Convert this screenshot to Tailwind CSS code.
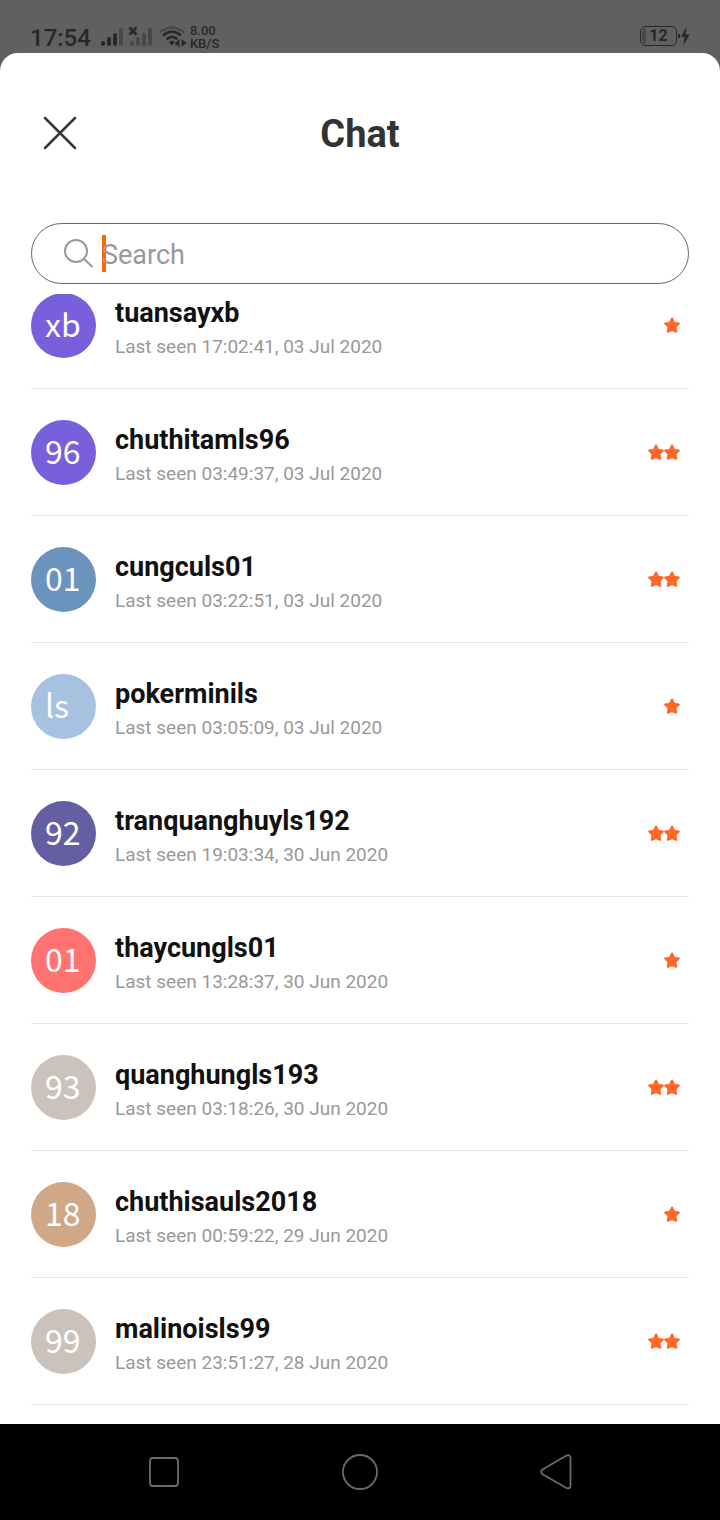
<!DOCTYPE html>
<html lang="en">
<head>
<meta charset="utf-8">
<meta name="viewport" content="width=device-width, initial-scale=1">
<title>Chat</title>
<script src="https://cdn.jsdelivr.net/npm/@tailwindcss/browser@4"></script>
</head>
<body class="flex min-h-screen flex-col bg-[#606060] font-['Roboto',sans-serif]">
<svg class="hidden" aria-hidden="true">
  <symbol id="star" viewBox="0 0 16 16"><path d="M8 1.500 10.100 5.800 14.800 6.500 11.500 9.900 12.200 14.800 8 13 3.800 14.800 4.500 9.900 1.200 6.500 5.900 5.800Z" fill="#ff6829" stroke="#ff6829" stroke-width="2" stroke-linejoin="round"/></symbol>
</svg>

<!-- Status bar -->
<header class="flex h-[53px] shrink-0 items-end pr-[30px] pb-[5px] pl-[30px] text-[#282828]">
  <span class="text-[24px] leading-5 font-medium">17:54</span>
  <svg class="ml-[10px] h-6 w-[52px]" viewBox="0 0 52 24" aria-hidden="true">
    <g fill="#282828"><rect x="0" y="17" width="4" height="5" rx="2"/><rect x="6" y="13" width="4" height="9" rx="2"/><rect x="12" y="9" width="4" height="13" rx="2"/></g>
    <g fill="#484848"><rect x="18" y="4" width="4" height="18" rx="2"/><rect x="29" y="17" width="4" height="5" rx="2"/><rect x="35" y="13" width="4" height="9" rx="2"/><rect x="41" y="9" width="4" height="13" rx="2"/><rect x="47" y="4" width="4" height="18" rx="2"/></g>
    <path d="M28.500 3.500l7 7M35.500 3.500l-7 7" stroke="#282828" stroke-width="2.600" fill="none"/>
  </svg>
  <svg class="ml-[6px] h-6 w-7" viewBox="0 0 28 24" aria-hidden="true">
    <g fill="none" stroke-width="2.600">
      <path d="M1 8.500Q13 -1.500 25 8.500" stroke="#484848"/>
      <path d="M4 11.500Q13 4 22 11.500M7.500 15.200Q13 10.500 18.500 15.200" stroke="#282828"/>
    </g>
    <path d="M10 18Q13 15.500 16 18L13 21.500Z" fill="#282828"/>
    <path d="M20.500 15v8l-5-3.200ZM22.500 23v-8l5 4Z" fill="#282828"/>
  </svg>
  <span class="ml-[3px] -mb-[2px] flex flex-col text-[13px] leading-[13px] font-medium"><span>8.00</span><span>KB/S</span></span>
  <span class="ml-auto flex items-center pb-[2px]">
    <span class="relative flex h-5 w-[37px] items-center justify-center rounded-[5px] border border-[#282828] text-[16px] leading-5 font-bold">
      <span class="absolute top-px bottom-px left-px w-1 rounded-l-sm bg-[#484848]"></span>12
    </span>
    <svg class="h-5 w-[13px]" viewBox="0 0 13 20" aria-hidden="true"><path d="M1 8h2v4H1ZM9.500 0.500 4 11H7.500L6.500 19.500 12.500 8.500H8.500Z" fill="#282828"/></svg>
  </span>
</header>

<main class="flex grow flex-col rounded-t-[18px] bg-white px-[31px]">
  <div class="grid grid-cols-[1fr_auto_1fr] items-center pt-14">
    <button type="button" aria-label="Close" class="ml-3 size-[34px]">
      <svg class="size-[34px]" viewBox="0 0 34 34" fill="none" stroke="#383838" stroke-width="2.500" stroke-linecap="round"><path d="M2 2 32 32M32 2 2 32"/></svg>
    </button>
    <h1 class="pt-[2px] text-[38px] leading-[46px] font-bold text-[#333]">Chat</h1>
  </div>

  <label class="relative mt-[66px] flex h-[61px] items-center rounded-full border border-[#666] pl-8">
    <svg class="size-[30px] shrink-0" viewBox="0 0 30 30" fill="none" stroke="#999" stroke-width="2"><circle cx="12" cy="12" r="11"/><path d="M19.500 19.500 28.500 28"/></svg>
    <span class="absolute top-[11px] left-[70px] h-[37px] w-1 bg-[#ff6600]"></span>
    <input type="text" placeholder="Search" aria-label="Search" class="relative ml-2 min-w-0 grow bg-transparent pt-[2px] pr-8 text-[27px] leading-8 text-[#333] outline-none placeholder:text-[#999]">
  </label>

  <!-- Contacts, scrolled part of the way into the first row -->
  <div class="mt-[10px] overflow-hidden">
    <ul class="-mt-8 pb-[19px]">
      <li class="flex h-[127px] items-center border-b border-[#e5e5e9]">
        <span class="h-[65px] w-[65px] shrink-0 rounded-full bg-[#7860dc] pl-[14px] font-['Noto_Sans_CJK_SC',sans-serif] text-[32px] leading-[60px] text-white">xb</span>
        <div class="ml-[19px] grow pt-[10px]"><h2 class="text-[27px] leading-[34px] font-bold text-[#111]">tuansayxb</h2><p class="text-[19px] leading-[34px] text-[#999]">Last seen 17:02:41, 03 Jul 2020</p></div>
        <span class="mr-[9px] flex"><svg class="size-4"><use href="#star"/></svg></span>
      </li>
      <li class="flex h-[127px] items-center border-b border-[#e5e5e5]">
        <span class="h-[65px] w-[65px] shrink-0 rounded-full bg-[#7860dc] pl-[14px] font-['Noto_Sans_CJK_SC',sans-serif] text-[32px] leading-[60px] text-white">96</span>
        <div class="ml-[19px] grow pt-[10px]"><h2 class="text-[27px] leading-[34px] font-bold text-[#111]">chuthitamls96</h2><p class="text-[19px] leading-[34px] text-[#999]">Last seen 03:49:37, 03 Jul 2020</p></div>
        <span class="mr-[9px] flex"><svg class="size-4"><use href="#star"/></svg><svg class="size-4"><use href="#star"/></svg></span>
      </li>
      <li class="flex h-[127px] items-center border-b border-[#e5e5e5]">
        <span class="h-[65px] w-[65px] shrink-0 rounded-full bg-[#6c92be] pl-[14px] font-['Noto_Sans_CJK_SC',sans-serif] text-[32px] leading-[60px] text-white">01</span>
        <div class="ml-[19px] grow pt-[10px]"><h2 class="text-[27px] leading-[34px] font-bold text-[#111]">cungculs01</h2><p class="text-[19px] leading-[34px] text-[#999]">Last seen 03:22:51, 03 Jul 2020</p></div>
        <span class="mr-[9px] flex"><svg class="size-4"><use href="#star"/></svg><svg class="size-4"><use href="#star"/></svg></span>
      </li>
      <li class="flex h-[127px] items-center border-b border-[#e5e5e5]">
        <span class="h-[65px] w-[65px] shrink-0 rounded-full bg-[#a6c2e0] pl-[14px] font-['Noto_Sans_CJK_SC',sans-serif] text-[32px] leading-[60px] text-white">ls</span>
        <div class="ml-[19px] grow pt-[10px]"><h2 class="text-[27px] leading-[34px] font-bold text-[#111]">pokerminils</h2><p class="text-[19px] leading-[34px] text-[#999]">Last seen 03:05:09, 03 Jul 2020</p></div>
        <span class="mr-[9px] flex"><svg class="size-4"><use href="#star"/></svg></span>
      </li>
      <li class="flex h-[127px] items-center border-b border-[#e5e5e5]">
        <span class="h-[65px] w-[65px] shrink-0 rounded-full bg-[#665ea2] pl-[14px] font-['Noto_Sans_CJK_SC',sans-serif] text-[32px] leading-[60px] text-white">92</span>
        <div class="ml-[19px] grow pt-[10px]"><h2 class="text-[27px] leading-[34px] font-bold text-[#111]">tranquanghuyls192</h2><p class="text-[19px] leading-[34px] text-[#999]">Last seen 19:03:34, 30 Jun 2020</p></div>
        <span class="mr-[9px] flex"><svg class="size-4"><use href="#star"/></svg><svg class="size-4"><use href="#star"/></svg></span>
      </li>
      <li class="flex h-[127px] items-center border-b border-[#e5e5e5]">
        <span class="h-[65px] w-[65px] shrink-0 rounded-full bg-[#ff7370] pl-[14px] font-['Noto_Sans_CJK_SC',sans-serif] text-[32px] leading-[60px] text-white">01</span>
        <div class="ml-[19px] grow pt-[10px]"><h2 class="text-[27px] leading-[34px] font-bold text-[#111]">thaycungls01</h2><p class="text-[19px] leading-[34px] text-[#999]">Last seen 13:28:37, 30 Jun 2020</p></div>
        <span class="mr-[9px] flex"><svg class="size-4"><use href="#star"/></svg></span>
      </li>
      <li class="flex h-[127px] items-center border-b border-[#e5e5e9]">
        <span class="h-[65px] w-[65px] shrink-0 rounded-full bg-[#ccc2bc] pl-[14px] font-['Noto_Sans_CJK_SC',sans-serif] text-[32px] leading-[60px] text-white">93</span>
        <div class="ml-[19px] grow pt-[10px]"><h2 class="text-[27px] leading-[34px] font-bold text-[#111]">quanghungls193</h2><p class="text-[19px] leading-[34px] text-[#999]">Last seen 03:18:26, 30 Jun 2020</p></div>
        <span class="mr-[9px] flex"><svg class="size-4"><use href="#star"/></svg><svg class="size-4"><use href="#star"/></svg></span>
      </li>
      <li class="flex h-[127px] items-center border-b border-[#e5e5e5]">
        <span class="h-[65px] w-[65px] shrink-0 rounded-full bg-[#d0a888] pl-[14px] font-['Noto_Sans_CJK_SC',sans-serif] text-[32px] leading-[60px] text-white">18</span>
        <div class="ml-[19px] grow pt-[10px]"><h2 class="text-[27px] leading-[34px] font-bold text-[#111]">chuthisauls2018</h2><p class="text-[19px] leading-[34px] text-[#999]">Last seen 00:59:22, 29 Jun 2020</p></div>
        <span class="mr-[9px] flex"><svg class="size-4"><use href="#star"/></svg></span>
      </li>
      <li class="flex h-[127px] items-center border-b border-[#e5e5e9]">
        <span class="h-[65px] w-[65px] shrink-0 rounded-full bg-[#ccc2bc] pl-[14px] font-['Noto_Sans_CJK_SC',sans-serif] text-[32px] leading-[60px] text-white">99</span>
        <div class="ml-[19px] grow pt-[10px]"><h2 class="text-[27px] leading-[34px] font-bold text-[#111]">malinoisls99</h2><p class="text-[19px] leading-[34px] text-[#999]">Last seen 23:51:27, 28 Jun 2020</p></div>
        <span class="mr-[9px] flex"><svg class="size-4"><use href="#star"/></svg><svg class="size-4"><use href="#star"/></svg></span>
      </li>
    </ul>
  </div>
</main>

<!-- System navigation -->
<nav class="grid h-24 shrink-0 grid-cols-3 items-center bg-black px-[66px]">
  <button type="button" aria-label="Recent apps" class="justify-self-center"><svg class="size-9" viewBox="0 0 36 36" fill="none" stroke="#6b6b6b" stroke-width="1.800"><rect x="4" y="4" width="28" height="28" rx="3"/></svg></button>
  <button type="button" aria-label="Home" class="justify-self-center"><svg class="size-9" viewBox="0 0 36 36" fill="none" stroke="#6b6b6b" stroke-width="1.800"><circle cx="18" cy="18" r="17"/></svg></button>
  <button type="button" aria-label="Back" class="justify-self-center"><svg class="size-9" viewBox="0 0 36 36" fill="none" stroke="#6b6b6b" stroke-width="1.800"><path d="M4.500 15.500 28 1.800Q32.500 0 32.500 4V31.500Q32.500 35.500 28 33.800L4.500 20.200Q1.500 17.800 4.500 15.500Z"/></svg></button>
</nav>
</body>
</html>
